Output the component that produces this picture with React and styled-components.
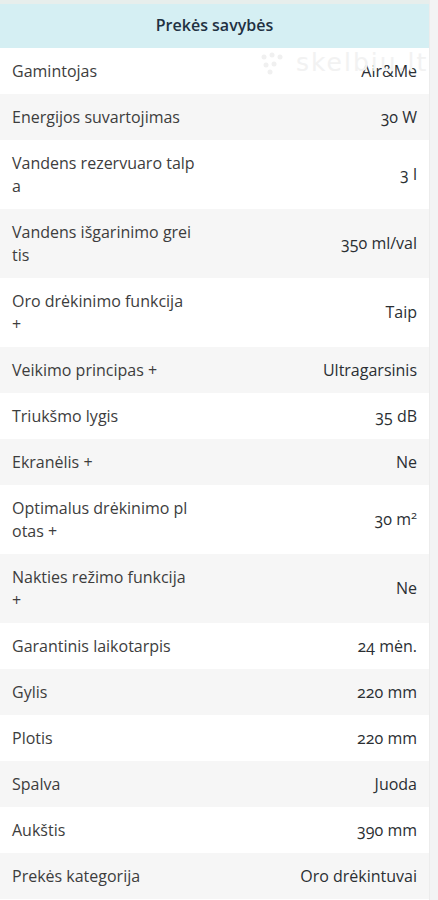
import React from 'react';
import styled, { createGlobalStyle } from 'styled-components';

const GlobalStyle = createGlobalStyle`
  html, body {
    margin: 0;
    padding: 0;
    background: #ffffff;
  }
  body {
    font-family: 'Open Sans', 'Lato', sans-serif;
    -webkit-font-smoothing: antialiased;
  }
`;

// labels are broken where the source page breaks them
const specs = [
  ['Gamintojas', 'Air&Me'],
  ['Energijos suvartojimas', '30 W'],
  ['Vandens rezervuaro talp\na', '3 l'],
  ['Vandens išgarinimo grei\ntis', '350 ml/val'],
  ['Oro drėkinimo funkcija\n+', 'Taip'],
  ['Veikimo principas +', 'Ultragarsinis'],
  ['Triukšmo lygis', '35 dB'],
  ['Ekranėlis +', 'Ne'],
  ['Optimalus drėkinimo pl\notas +', <>30 m<sup>2</sup></>],
  ['Nakties režimo funkcija\n+', 'Ne'],
  ['Garantinis laikotarpis', '24 mėn.'],
  ['Gylis', '220 mm'],
  ['Plotis', '220 mm'],
  ['Spalva', 'Juoda'],
  ['Aukštis', '390 mm'],
  ['Prekės kategorija', 'Oro drėkintuvai'],
];

const Page = styled.div`
  display: flex;
  width: 438px;
  min-height: 900px;
  overflow: hidden;
`;

const Panel = styled.div`
  position: relative;
  width: 430px;
  display: flex;
  flex-direction: column;
  border-top: 4px solid #e7eeec;
`;

const Gutter = styled.div`
  width: 8px;
  background: #f3f4f4;
  border-left: 1px solid #ececec;
`;

const Header = styled.div`
  height: 44px;
  padding-bottom: 3px;
  box-sizing: border-box;
  display: flex;
  align-items: center;
  justify-content: center;
  background: #d5eff3;
  color: #1f3142;
  font-size: 16px;
  font-weight: 600;
`;

const Row = styled.div`
  display: flex;
  align-items: center;
  justify-content: space-between;
  padding: 11.5px 12px;
  background: ${p => (p.$odd ? '#f6f6f6' : '#ffffff')};
  font-size: 16px;
  line-height: 23px;
`;

const Label = styled.div`
  width: 200px;
  color: #3d3d3d;
  white-space: pre-line;
`;

const Value = styled.div`
  color: #2b2f33;
  text-align: right;
  font-variant-numeric: oldstyle-nums;

  sup {
    font-size: 11px;
    line-height: 0;
    vertical-align: 6px;
  }
`;

const Watermark = styled.div`
  position: absolute;
  top: 44px;
  left: 258px;
  display: flex;
  align-items: center;
  gap: 8px;
  color: #f2f2f2;
  font-family: 'DejaVu Sans', sans-serif;
  font-size: 25px;
  letter-spacing: 2px;
  pointer-events: none;
`;

export default function App() {
  return (
    <>
      <GlobalStyle />
      <Page>
        <Panel>
          <Header>Prekės savybės</Header>
          {specs.map(([label, value], i) => (
            <Row key={label} $odd={i % 2 === 1}>
              <Label>{label}</Label>
              <Value>{value}</Value>
            </Row>
          ))}
          <Watermark>
            <svg width="30" height="24" viewBox="0 0 30 24" fill="#f0f0f0">
              <circle cx="6" cy="6" r="2.5" />
              <circle cx="14" cy="4" r="2.5" />
              <circle cx="22" cy="6" r="2.5" />
              <circle cx="8" cy="14" r="2.5" />
              <circle cx="16" cy="13" r="2.5" />
              <circle cx="12" cy="21" r="2.5" />
            </svg>
            skelbiu.lt
          </Watermark>
        </Panel>
        <Gutter />
      </Page>
    </>
  );
}
